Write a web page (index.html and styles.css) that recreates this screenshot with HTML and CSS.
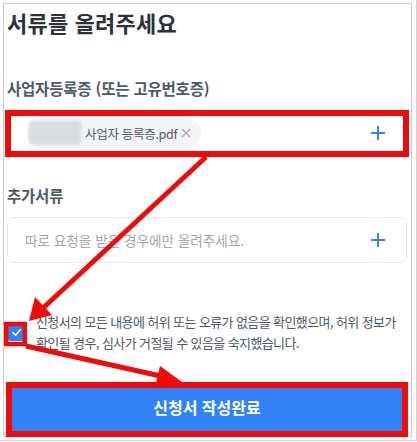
FILE: index.html
```html
<!DOCTYPE html>
<html lang="ko">
<head>
    <meta charset="UTF-8">
    <meta name="viewport" content="width=device-width, initial-scale=1.0">
    <title>서류를 올려주세요</title>
    <link rel="stylesheet" href="styles.css">
</head>
<body>
    <div class="shot">
        <div class="frame">
            <h1 class="title">서류를 올려주세요</h1>

            <h2 class="label first">사업자등록증 (또는 고유번호증)</h2>
            <div class="upload">
                <span class="chip">
                    <span class="blur"></span>
                    <span class="fname">사업자 등록증.pdf</span>
                    <svg class="remove" viewBox="0 0 10 10" width="10" height="10">
                        <path d="M1 1 L9 9 M9 1 L1 9" stroke="#a3a9b1" stroke-width="1.4" fill="none"/>
                    </svg>
                </span>
                <svg class="plus" viewBox="0 0 16 16" width="16" height="16">
                    <path d="M8 1 V15 M1 8 H15" stroke="#3182f6" stroke-width="2" fill="none"/>
                </svg>
            </div>

            <h2 class="label second">추가서류</h2>
            <div class="upload">
                <span class="placeholder">따로 요청을 받은 경우에만 올려주세요.</span>
                <svg class="plus" viewBox="0 0 16 16" width="16" height="16">
                    <path d="M8 1 V15 M1 8 H15" stroke="#3182f6" stroke-width="2" fill="none"/>
                </svg>
            </div>

            <label class="agree">
                <span class="check">
                    <svg viewBox="0 0 12 12" width="11" height="11">
                        <path d="M2 6.2 L5 9 L10 3" stroke="#fff" stroke-width="1.8" fill="none" stroke-linecap="round" stroke-linejoin="round"/>
                    </svg>
                </span>
                <span class="agree-text">신청서의 모든 내용에 허위 또는 오류가 없음을 확인했으며, 허위 정보가 확인될 경우, 심사가 거절될 수 있음을 숙지했습니다.</span>
            </label>

            <button class="submit">신청서 작성완료</button>
        </div>

        <!-- red annotation marks drawn over the screenshot -->
        <svg class="marks" viewBox="0 0 417 442" width="417" height="442">
            <g fill="none" stroke="#f00a0a">
                <rect x="8" y="113" width="398" height="41" stroke-width="6"/>
                <rect x="6.2" y="324" width="18.6" height="20" stroke-width="4.5"/>
                <rect x="9" y="385" width="396" height="49" stroke-width="6"/>
                <line x1="206" y1="157" x2="42" y2="309" stroke-width="5"/>
                <line x1="26" y1="346" x2="165" y2="377" stroke-width="5"/>
            </g>
            <g fill="#f00a0a">
                <polygon points="29,321 35,297 52,315"/>
                <polygon points="182,382 160,366 155,387"/>
            </g>
        </svg>
    </div>
</body>
</html>
```

FILE: styles.css
```css
body {
    margin: 0;
    background: #fff;
    font-family: "Noto Sans CJK KR", "Noto Sans", sans-serif;
}
.shot {
    position: relative;
    width: 417px;
    height: 441px;
    box-sizing: border-box;
    padding: 3px 0 0 3px;
    border-right: 1px solid #d4d4d4;
    border-bottom: 1px solid #d4d4d4;
}
.frame {
    width: 409px;
    height: 434px;
    box-sizing: border-box;
    border: 1px solid #c9c9c9;
    padding: 3px 4px 0 3px;
    display: flex;
    flex-direction: column;
    overflow: hidden;
}
.title {
    margin: 0;
    font-size: 22px;
    line-height: 30px;
    font-weight: 700;
    color: #2b323c;
    letter-spacing: 0.2px;
}
.label {
    margin: 0;
    font-size: 15.5px;
    line-height: 22px;
    font-weight: 600;
    color: #4e5968;
    letter-spacing: -0.2px;
}
.label.first {
    margin-top: 40px;
}
.label.second {
    margin-top: 28px;
}
.upload {
    margin-top: 11px;
    height: 46px;
    box-sizing: border-box;
    border: 1px solid #e5e8eb;
    border-radius: 7px;
    display: flex;
    align-items: center;
    justify-content: space-between;
    padding: 0 20px 0 17px;
}
.chip {
    height: 30px;
    display: flex;
    align-items: center;
    gap: 4px;
    padding: 0 10px 0 2px;
    margin-left: 2px;
    background: #f2f4f6;
    border-radius: 15px;
}
.blur {
    width: 52px;
    height: 24px;
    background: #d9dcdf;
    border-radius: 3px;
    filter: blur(1.5px);
}
.fname {
    font-size: 12.5px;
    color: #4e5968;
    letter-spacing: -0.3px;
}
.remove {
    display: block;
}
.placeholder {
    font-size: 13.6px;
    color: #a0a7b0;
}
.plus {
    display: block;
}
.agree {
    margin-top: 48px;
    display: flex;
    align-items: center;
    gap: 11px;
    padding-left: 1px;
}
.check {
    flex: none;
    width: 17px;
    height: 17px;
    border-radius: 3px;
    background: #3182f6;
    display: flex;
    align-items: center;
    justify-content: center;
}
.agree-text {
    font-size: 13px;
    line-height: 21px;
    color: #4e5968;
    letter-spacing: -0.6px;
}
.submit {
    margin-top: 29px;
    height: 50px;
    border: 0;
    border-radius: 6px;
    background: #3182f6;
    color: #fff;
    font-family: inherit;
    font-size: 16px;
    font-weight: 700;
}
.marks {
    position: absolute;
    top: 0;
    left: 0;
    pointer-events: none;
}
```
